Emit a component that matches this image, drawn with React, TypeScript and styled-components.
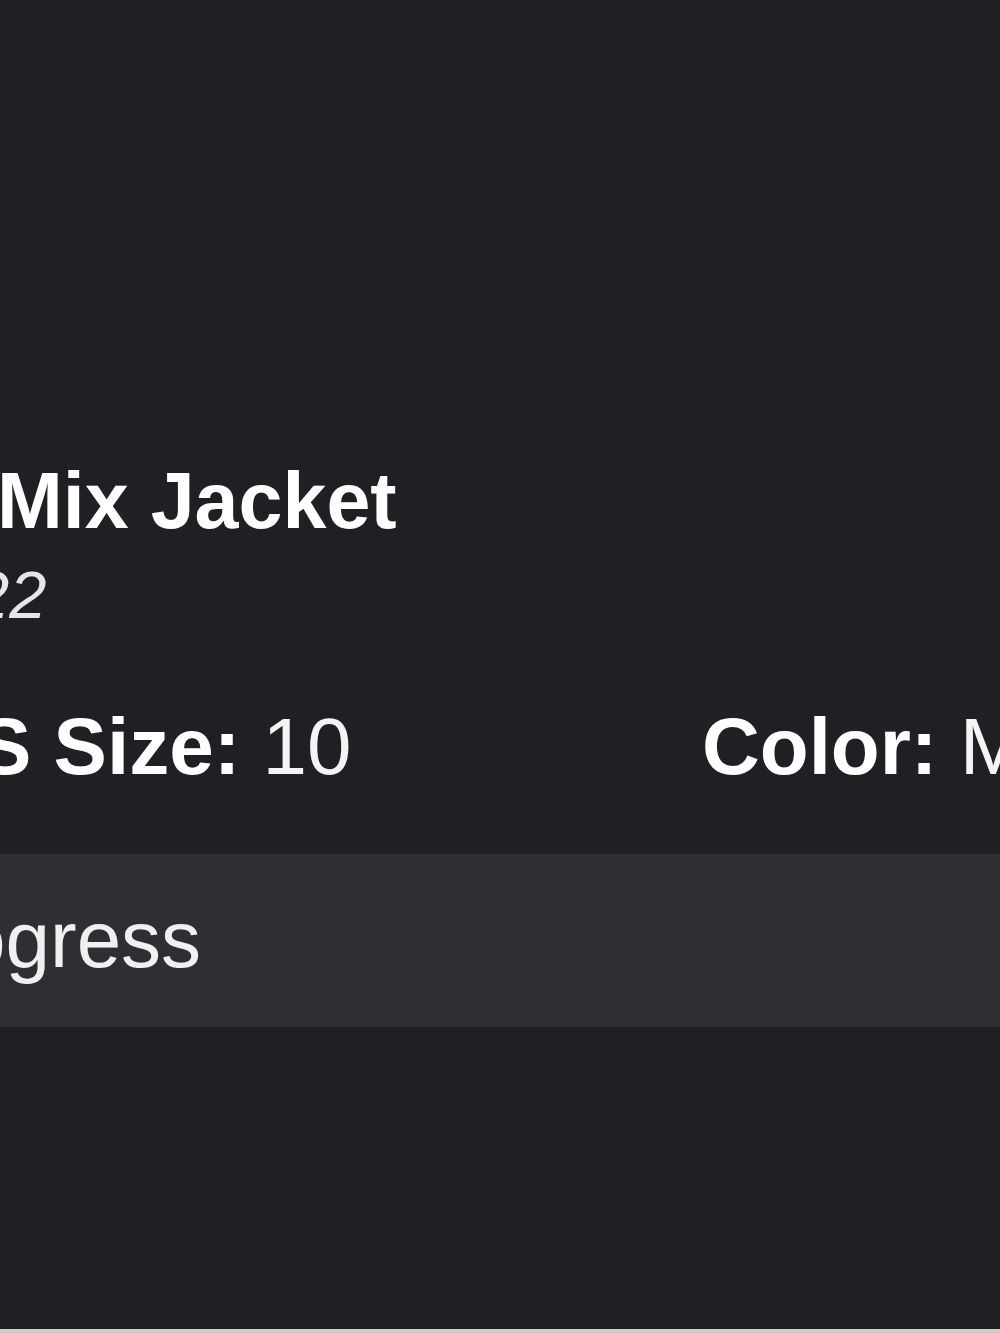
import React from "react";
import styled, { createGlobalStyle } from "styled-components";

const GlobalStyle = createGlobalStyle`
  html, body {
    margin: 0;
    padding: 0;
    background: #cdcdcd;
    overflow: hidden;
  }
  body {
    font-family: "Liberation Sans", Arial, Helvetica, sans-serif;
  }
`;

const Screen = styled.div`
  height: 1329px;
  box-sizing: border-box;
  padding-top: 456px;
  background: #1f2024;
  color: #ffffff;
  overflow: hidden;
  display: flex;
  flex-direction: column;
`;

// a line of text whose start runs off the left edge of the screen
const Line = styled.div<{ $shift: number }>`
  display: flex;
  margin-left: ${(p) => p.$shift}px;
  white-space: pre;
`;

// the part of a line that sits before the visible edge
const Cut = styled.span`
  display: flex;
  justify-content: flex-end;
  width: 0;
  flex-shrink: 0;
  white-space: pre;
`;

const Title = styled(Line)`
  font-size: 79px;
  line-height: 90px;
  font-weight: 700;
`;

const DateLine = styled(Line)`
  margin-top: 9px;
  font-size: 67px;
  line-height: 80px;
  font-style: italic;
  color: #e6e6e7;
`;

const Specs = styled(Line)`
  margin-top: 67px;
  font-size: 80px;
  line-height: 90px;
`;

const SpecCell = styled.div<{ $width?: number }>`
  display: flex;
  flex-shrink: 0;
  width: ${(p) => (p.$width ? `${p.$width}px` : "auto")};
`;

const Label = styled.span`
  font-weight: 700;
`;

const Value = styled.span`
  font-weight: 400;
  color: #f4f4f4;
`;

const StatusBar = styled.div`
  margin-top: 62px;
  padding: 41px 0 42px;
  background: #2e2f32;
`;

const Status = styled(Line)`
  font-size: 80px;
  line-height: 90px;
  color: #f0f0f0;
`;

export default function App() {
  return (
    <>
      <GlobalStyle />
      <Screen>
        <Title $shift={-3}>
          <Cut>Camo </Cut>
          <span>Mix Jacket</span>
        </Title>
        <DateLine $shift={-28}>
          <Cut>Ordered 10/24/20</Cut>
          <span>22</span>
        </DateLine>
        <Specs $shift={-22}>
          <SpecCell $width={724}>
            <Cut>
              <Label>U</Label>
            </Cut>
            <Label>S Size:</Label>
            <Value> 10</Value>
          </SpecCell>
          <SpecCell>
            <Label>Color:</Label>
            <Value> Multi-Color</Value>
          </SpecCell>
        </Specs>
        <StatusBar>
          <Status $shift={-39}>
            <Cut>In Pr</Cut>
            <span>ogress</span>
          </Status>
        </StatusBar>
      </Screen>
    </>
  );
}
